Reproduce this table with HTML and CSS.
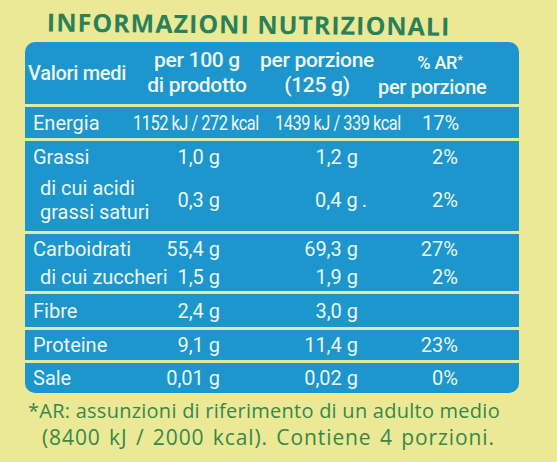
FILE: index.html
```html
<!DOCTYPE html>
<html lang="it">
<head>
  <meta charset="UTF-8" />
  <meta name="viewport" content="width=device-width, initial-scale=1.0"/>
  <title>Informazioni nutrizionali</title>
  <link rel="stylesheet" href="styles.css">
</head>
<body>

  <div class="label">
    <h1 class="title">INFORMAZIONI NUTRIZIONALI</h1>

    <div class="panel">
      <!-- Header -->
      <div class="head">
        <div class="h-name">Valori medi</div>
        <div class="h-col">per 100 g<br>di prodotto</div>
        <div class="h-col">per porzione<br>(125 g)</div>
        <div class="h-col h-ar"><span class="ar">% AR<span class="star">*</span></span><br>per porzione</div>
      </div>

      <!-- Energia -->
      <div class="sec energy">
        <div class="name">Energia</div>
        <div class="e2"><span class="squeeze">1152 kJ / 272 kcal</span></div>
        <div class="e3"><span class="squeeze">1439 kJ / 339 kcal</span></div>
        <div class="e4">17%</div>
      </div>

      <!-- Grassi -->
      <div class="sec grassi">
        <div class="row">
          <div class="name">Grassi</div>
          <div class="v2">1,0 g</div>
          <div class="v3">1,2 g</div>
          <div class="v4">2%</div>
        </div>
        <div class="row sub two">
          <div class="name">di cui acidi<br>grassi saturi</div>
          <div class="v2">0,3 g</div>
          <div class="v3">0,4 g<span class="dot">.</span></div>
          <div class="v4">2%</div>
        </div>
      </div>

      <!-- Carboidrati -->
      <div class="sec carbo">
        <div class="row">
          <div class="name">Carboidrati</div>
          <div class="v2">55,4 g</div>
          <div class="v3">69,3 g</div>
          <div class="v4">27%</div>
        </div>
        <div class="row sub">
          <div class="name">di cui zuccheri</div>
          <div class="v2">1,5 g</div>
          <div class="v3">1,9 g</div>
          <div class="v4">2%</div>
        </div>
      </div>

      <div class="sec row fibre">
        <div class="name">Fibre</div>
        <div class="v2">2,4 g</div>
        <div class="v3">3,0 g</div>
        <div class="v4"></div>
      </div>

      <div class="sec row">
        <div class="name">Proteine</div>
        <div class="v2">9,1 g</div>
        <div class="v3">11,4 g</div>
        <div class="v4">23%</div>
      </div>

      <div class="sec row">
        <div class="name">Sale</div>
        <div class="v2">0,01 g</div>
        <div class="v3">0,02 g</div>
        <div class="v4">0%</div>
      </div>
    </div>

    <p class="note">
      <span class="line1">*AR: assunzioni di riferimento di un adulto medio</span>
      <span class="line2">(8400 kJ / 2000 kcal). Contiene 4 porzioni.</span>
    </p>
  </div>

</body>
</html>
```

FILE: styles.css
```css
/* Reset & base */
* { box-sizing: border-box; margin: 0; padding: 0; }
body {
  background: #ebe996;
  font-family: Roboto, "Liberation Sans", sans-serif;
  color: #eef6f0;
}

.label {
  width: 557px;
  height: 462px;
  overflow: hidden;
}

/* Title */
.title {
  padding: 4px 0 0 47px;
  font-family: "Open Sans", sans-serif;
  font-size: 25px;
  font-weight: 700;
  line-height: 34px;
  letter-spacing: 1px;
  color: #2a8058;
  white-space: nowrap;
  transform: rotate(0.6deg);
  transform-origin: left center;
}

/* Blue table */
.panel {
  margin: 4px 0 0 25px;
  width: 494px;
  display: flex;
  flex-direction: column;
  gap: 3px;
  background: #e0eaa2;
  border-radius: 10px;
  overflow: hidden;
  font-size: 20px;
}
.sec { background: #1c96cc; }

/* Header */
.head {
  height: 62px;
  display: grid;
  grid-template-columns: 113px 118px 122px 94px 1fr;
  align-items: center;
  background: #1c96cc;
  font-weight: 500;
  line-height: 25px;
  letter-spacing: -0.3px;
}
.h-name { padding-left: 3px; }
.h-col { text-align: center; white-space: nowrap; font-size: 21px; }
.h-ar { font-size: 20px; }
.ar { padding-left: 30px; font-size: 18px; }
.star { font-size: 13px; vertical-align: 5px; }

/* Rows */
.row, .energy {
  display: grid;
  grid-template-columns: 108px 132px 147px 107px;
  align-items: center;
  line-height: 24px;
}
.name { padding-left: 8px; white-space: nowrap; }
.sub .name { padding-left: 15px; }
.v2, .v3, .v4 { text-align: right; white-space: nowrap; }
.v2 { padding-right: 45px; }
.v3 { padding-right: 54px; }
.v4 { padding-right: 61px; }
.dot { margin-right: -9px; padding-left: 4px; }

.energy {
  height: 31px;
}
.e2, .e3, .e4 { white-space: nowrap; }
.squeeze {
  display: inline-block;
  letter-spacing: -0.6px;
  transform: scaleX(0.82);
  transform-origin: left center;
}
.e3, .e4 { padding-left: 10px; }

.grassi { height: 90px; }
.grassi .row { height: 32px; }
.grassi .two { height: 58px; padding-bottom: 4px; }

.carbo { height: 57px; padding-top: 1px; }
.carbo .row { height: 28px; }

.sec.row { height: 30px; }
.sec.fibre { height: 33px; }

/* Footnote */
.note {
  padding-top: 4px;
  font-family: "Open Sans", sans-serif;
  font-size: 20px;
  line-height: 27px;
  color: #37874a;
  white-space: nowrap;
}
.line1 {
  display: block;
  padding-left: 28px;
  letter-spacing: 0.25px;
}
.line2 {
  display: block;
  padding-left: 42px;
  font-size: 21px;
  letter-spacing: 0.9px;
  word-spacing: 2px;
}
```
